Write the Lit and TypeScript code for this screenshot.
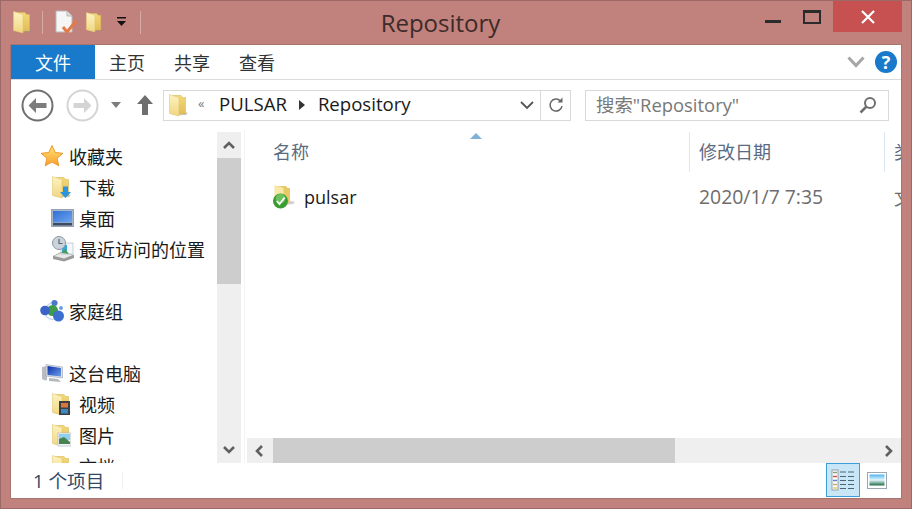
import { LitElement, css, html, svg } from "lit";
import { customElement } from "lit/decorators.js";

const folder = (w = 20, h = 24, extra: unknown = null) => html`
  <svg width=${w} height=${h} viewBox="0 0 20 24">
    <path d="M8 22.500l10-.5 2-2-3-1z" fill="#8a8a8a" opacity=".45" />
    <path d="M4 2.500h9l1.500 2h3v16.500H4z" fill="url(#backFold)" stroke="#d9b95c" stroke-width=".6" />
    <path d="M1.500 1.500l9.500 3V23l-9.500-2.500z" fill="url(#frontFold)" stroke="#e2c873" stroke-width=".6" />
    ${extra}
  </svg>
`;

const arrowCircle = (dir: "l" | "r", ring: string, fill: string) => html`
  <svg width="33" height="33" viewBox="0 0 33 33">
    <circle cx="16.5" cy="16.5" r="15" fill="#fff" stroke=${ring} stroke-width="2" />
    <path
      d=${dir === "l"
        ? "M15 9l-7.500 7.500 7.500 7.500v-5h10.500v-5H15z"
        : "M18 9l7.500 7.500-7.500 7.500v-5H7.500v-5H18z"}
      fill=${fill}
    />
  </svg>
`;

const chevron = (d: string, w = 14, h = 14, color = "#606060", weight = 2.6) => html`
  <svg width=${w} height=${h} viewBox="0 0 14 14">
    <path d=${d} fill="none" stroke=${color} stroke-width=${weight} />
  </svg>
`;

const icons: Record<string, unknown> = {
  star: html`<svg width="24" height="24" viewBox="0 0 24 24">
    <path
      d="M12 1.500l3.200 7 7.600.8-5.700 5 1.700 7.500L12 18l-6.800 3.800 1.700-7.500-5.700-5 7.600-.8z"
      fill="url(#starFill)"
      stroke="#ee9a2c"
      stroke-width="1"
    />
  </svg>`,
  download: folder(20, 24, svg`
    <path d="M12 11.500h5V17h3l-5.500 6-5.500-6h3z" fill="#2a94dc" />
  `),
  desktop: html`<svg width="23" height="18" viewBox="0 0 23 18">
    <rect x=".5" y=".5" width="22" height="17" fill="#aab4c4" stroke="#96a2b5" />
    <rect x="2" y="2" width="19" height="11.500" fill="url(#screenFill)" />
    <rect x="2" y="14" width="19" height="2.500" fill="#3e4a5e" />
  </svg>`,
  recent: html`<svg width="24" height="26" viewBox="0 0 24 26">
    <path d="M2 20l8-4 13 3v3l-10 3.500L2 23z" fill="#9a9a9a" />
    <path d="M3 20l8-3.500L22 19l-9 3.500z" fill="#e8e8e8" />
    <rect x="10" y="7" width="12" height="11" fill="#f3f7fa" stroke="#aab4bc" stroke-width=".6" />
    <rect x="11" y="9" width="5" height="7" fill="#35a8d8" />
    <path d="M10 17l4-4 4 5z" fill="#4c9a60" />
    <circle cx="8" cy="7" r="6.500" fill="#c9d3dc" stroke="#8d99a5" />
    <path d="M8 3v4.500h3.500" fill="none" stroke="#5a6670" stroke-width="1.200" />
  </svg>`,
  homegroup: html`<svg width="24" height="22" viewBox="0 0 24 22">
    <path d="M6 11c0-7 6-10 12-8M18 18c-5 3-11 1-13-4" fill="none" stroke="#c6daf0" stroke-width="1.500" />
    <circle cx="14.500" cy="3" r="3" fill="#4f77c9" />
    <circle cx="12.500" cy="10.500" r="5.500" fill="#3f9a4c" />
    <circle cx="5" cy="10.500" r="4.800" fill="#3c63c6" />
    <circle cx="18.500" cy="16" r="5.500" fill="#3d6fd0" />
    <circle cx="21" cy="8" r="2" fill="#6f9ddd" />
  </svg>`,
  computer: html`<svg style="margin-left:2px" width="21" height="20" viewBox="0 0 21 20">
    <path d="M0 4l5-1v14l-2 .5L0 16z" fill="#b9bdc2" />
    <path d="M4 1.500L20.500 4v11L4 13z" fill="#dfe4ea" stroke="#9ca3ac" stroke-width=".6" />
    <path d="M5.500 3L19 5v8.500L5.500 12z" fill="url(#pcFill)" />
    <path d="M7 15l9 1 3 3-12-1z" fill="#b4b8bd" />
  </svg>`,
  video: folder(20, 24, svg`
    <rect x="8" y="9" width="11" height="14" fill="#3c3f44" />
    <rect x="10" y="11" width="7" height="4.500" fill="#d9783c" />
    <rect x="10" y="17" width="7" height="4.500" fill="#3c8ac0" />
  `),
  picture: folder(20, 24, svg`
    <rect x="7" y="10" width="13" height="13" fill="#f4f6f7" stroke="#a7b1b8" stroke-width=".6" />
    <rect x="8" y="11" width="11" height="6" fill="#8fd0ee" />
    <path d="M8 21v-5l5-2 6 5v2z" fill="#47824f" />
  `),
  docs: folder(20, 24, svg`
    <rect x="8" y="10" width="11" height="13" fill="#f2f2f2" stroke="#a7b1b8" stroke-width=".6" />
  `),
};

@customElement("app-root")
export class AppRoot extends LitElement {
  static styles = css`
    :host {
      display: block;
      width: 912px;
      height: 509px;
      font-family: "Open Sans", "Noto Sans CJK SC", sans-serif;
      font-size: 18px;
      color: #1a1a1a;
    }

    svg {
      display: block;
      flex: none;
    }

    .defs {
      position: absolute;
      width: 0;
      height: 0;
    }

    .window {
      box-sizing: border-box;
      height: 509px;
      display: flex;
      flex-direction: column;
      background: #c1817c;
      border: 1px solid #9b6a66;
      padding: 0 10px 10px;
    }

    /* title bar */
    .titlebar {
      height: 44px;
      flex: none;
      display: flex;
      align-items: flex-start;
      margin-right: -1px;
    }

    .qat {
      width: 125px;
      flex: none;
      height: 44px;
      display: flex;
      align-items: center;
      padding-left: 1px;
      margin-top: -1px;
    }

    .qat-sep {
      width: 2px;
      height: 23px;
      background: #ad7c79;
      border-right: 1px solid #d6aaa6;
      box-sizing: border-box;
    }

    .title {
      flex: 1;
      text-align: center;
      font-size: 24px;
      line-height: 44px;
      color: #3c2b2a;
      padding-right: 4px;
    }

    .controls {
      display: flex;
      align-items: flex-start;
      flex: none;
    }

    .ctl {
      height: 31px;
      display: flex;
      align-items: center;
      justify-content: center;
    }

    .ctl.min {
      width: 50px;
    }

    .ctl.max {
      width: 28px;
      margin-right: 7px;
    }

    .ctl.close {
      width: 69px;
      background: #c75050;
    }

    /* client area */
    .client {
      flex: 1;
      min-height: 0;
      background: #fff;
      box-shadow: 0 0 0 1px #a97470;
      display: flex;
      flex-direction: column;
    }

    .ribbon {
      height: 34px;
      flex: none;
      display: flex;
      align-items: stretch;
      border-bottom: 1px solid #dadbdc;
    }

    .tab-file {
      width: 84px;
      background: #1979ca;
      color: #fff;
      display: flex;
      align-items: center;
      justify-content: center;
    }

    .tabs {
      display: flex;
      align-items: center;
      gap: 29px;
      padding-left: 14px;
      flex: 1;
      color: #333;
    }

    .ribbon-right {
      display: flex;
      align-items: center;
      gap: 10px;
      padding-right: 4px;
    }

    .help {
      width: 22px;
      height: 22px;
      border-radius: 50%;
      background: #1979ca;
      color: #fff;
      font-size: 18px;
      font-weight: 700;
      line-height: 22px;
      text-align: center;
    }

    /* navigation */
    .nav {
      height: 50px;
      flex: none;
      display: flex;
      align-items: center;
    }

    .back {
      margin-left: 10px;
    }

    .forward {
      margin-left: 12px;
    }

    .history {
      margin-left: 12px;
    }

    .up {
      margin-left: 16px;
    }

    .address {
      box-sizing: border-box;
      width: 408px;
      height: 31px;
      margin-left: 10px;
      border: 1px solid #d9d9d9;
      display: flex;
      align-items: center;
      padding-left: 4px;
    }

    .crumb-quote {
      margin-left: 10px;
      width: 21px;
      font-size: 13px;
      color: #7a7a7a;
    }

    .crumb-sep {
      margin: 0 13px 0 12px;
    }

    .addr-path {
      flex: 1;
      display: flex;
      align-items: center;
      font-size: 18.6px;
      line-height: 27px;
      padding-bottom: 4px;
    }

    .addr-path svg {
      margin-top: 4px;
    }

    .addr-drop {
      width: 30px;
      display: flex;
      justify-content: center;
      padding-left: 3px;
      box-sizing: border-box;
    }

    .addr-refresh {
      box-sizing: border-box;
      width: 30px;
      height: 29px;
      border-left: 1px solid #d9d9d9;
      display: flex;
      align-items: center;
      justify-content: center;
    }

    .search {
      box-sizing: border-box;
      width: 304px;
      height: 31px;
      margin-left: 14px;
      border: 1px solid #d9d9d9;
      display: flex;
      align-items: center;
      justify-content: space-between;
      padding: 0 11px 0 10px;
      color: #787878;
    }

    .search span {
      font-size: 18.4px;
      line-height: 27px;
      padding-bottom: 2px;
    }

    /* content */
    .content {
      flex: 1;
      min-height: 0;
      display: flex;
    }

    .sidebar {
      width: 206px;
      flex: none;
      overflow: hidden;
      padding-top: 10px;
      box-sizing: border-box;
    }

    .node {
      height: 31px;
      display: flex;
      align-items: center;
      white-space: nowrap;
    }

    .node .ico {
      width: 30px;
      flex: none;
      display: flex;
      box-sizing: border-box;
    }

    .node.top {
      padding-left: 28px;
    }

    .node.top .ico {
      padding-left: 1px;
    }

    .node.child {
      padding-left: 38px;
    }

    .node.child .ico {
      padding-left: 2px;
    }

    .spacer {
      height: 31px;
    }

    .vscroll {
      width: 24px;
      flex: none;
      margin-top: 2px;
      background: #efefef;
      display: flex;
      flex-direction: column;
    }

    .sb-btn {
      height: 26px;
      flex: none;
      display: flex;
      align-items: center;
      justify-content: center;
    }

    .v-thumb {
      height: 126px;
      flex: none;
      background: #cdcdcd;
    }

    .v-track {
      flex: 1;
    }

    .main {
      flex: 1;
      min-width: 0;
      margin-left: 3px;
      padding-left: 2px;
      border-left: 1px solid #f4f4f4;
      display: flex;
      flex-direction: column;
    }

    .files {
      flex: 1;
      min-height: 0;
      overflow: hidden;
      color: #6d6d6d;
    }

    .head,
    .file {
      display: grid;
      grid-template-columns: 442px 195px 1fr;
      white-space: nowrap;
    }

    .head {
      height: 40px;
      margin-top: 2px;
      color: #5a6b80;
    }

    .head > div {
      position: relative;
      line-height: 40px;
      padding-left: 10px;
      overflow: hidden;
    }

    .head > div + div {
      border-left: 1px solid #dbe7f3;
      padding-left: 9px;
    }

    .head .name {
      padding-left: 26px;
    }

    .sort {
      position: absolute;
      left: 223px;
      top: 1px;
    }

    .file {
      margin-top: 9px;
      height: 31px;
      align-items: center;
    }

    .file > div {
      padding-left: 10px;
      overflow: hidden;
    }

    .file .date {
      font-size: 19.4px;
    }

    .file .name {
      padding-left: 26px;
      display: flex;
      align-items: center;
      gap: 9px;
      color: #1a1a1a;
    }

    .hscroll {
      height: 25px;
      flex: none;
      background: #efefef;
      display: flex;
    }

    .hscroll .sb-btn {
      width: 26px;
      height: auto;
    }

    .h-thumb {
      width: 402px;
      background: #cdcdcd;
    }

    .h-track {
      flex: 1;
    }

    /* status bar */
    .status {
      height: 35px;
      flex: none;
      display: flex;
      align-items: center;
      color: #2f4a68;
    }

    .count {
      margin-left: 22px;
      width: 89px;
      font-size: 18.6px;
      line-height: 30px;
    }

    .status-sep {
      width: 1px;
      height: 17px;
      background: #f0f0f0;
    }

    .views {
      margin-left: auto;
      display: flex;
      align-items: center;
      margin-right: 7px;
      align-self: flex-start;
    }

    .view {
      box-sizing: border-box;
      width: 34px;
      height: 34px;
      display: flex;
      align-items: center;
      justify-content: center;
    }

    .view.on {
      background: #c9e6f6;
      border: 1px solid #3a9fd8;
    }
  `;

  render() {
    return html`
      <svg class="defs" aria-hidden="true">
        <defs>
          <linearGradient id="frontFold" x1="0" y1="0" x2="0" y2="1">
            <stop offset="0" stop-color="#fdf3c0" />
            <stop offset="1" stop-color="#f0d682" />
          </linearGradient>
          <linearGradient id="backFold" x1="0" y1="0" x2="0" y2="1">
            <stop offset="0" stop-color="#f3d978" />
            <stop offset="1" stop-color="#e2bd58" />
          </linearGradient>
          <linearGradient id="starFill" x1="0" y1="0" x2="0" y2="1">
            <stop offset="0" stop-color="#ffe27a" />
            <stop offset="1" stop-color="#fb9f2a" />
          </linearGradient>
          <linearGradient id="screenFill" x1="0" y1="0" x2="1" y2="1">
            <stop offset="0" stop-color="#2f6fd6" />
            <stop offset="1" stop-color="#6ea5ec" />
          </linearGradient>
          <linearGradient id="pcFill" x1="0" y1="0" x2="1" y2="1">
            <stop offset="0" stop-color="#0c2fa8" />
            <stop offset="1" stop-color="#6da0ea" />
          </linearGradient>
          <linearGradient id="thumbFill" x1="0" y1="0" x2="0" y2="1">
            <stop offset="0" stop-color="#4fb4ee" />
            <stop offset=".5" stop-color="#e4f6fc" />
            <stop offset="1" stop-color="#1f6a42" />
          </linearGradient>
        </defs>
      </svg>
      <div class="window">
        ${this.renderTitlebar()}
        <div class="client">
          ${this.renderRibbon()} ${this.renderNav()}
          <div class="content">
            ${this.renderSidebar()}
            <div class="vscroll">
              <div class="sb-btn">${chevron("M2 10l5-5 5 5")}</div>
              <div class="v-thumb"></div>
              <div class="v-track"></div>
              <div class="sb-btn">${chevron("M2 4l5 5 5-5")}</div>
            </div>
            ${this.renderMain()}
          </div>
          ${this.renderStatus()}
        </div>
      </div>
    `;
  }

  renderTitlebar() {
    return html`
      <div class="titlebar">
        <div class="qat">
          ${folder(20, 24)}
          <div class="qat-sep" style="margin-left:10px"></div>
          <svg style="margin-left:12px" width="22" height="24" viewBox="0 0 22 24">
            <path d="M1 1h11l5 5v16H1z" fill="#f6f6f6" stroke="#b9b9b9" />
            <path d="M12 1v5h5" fill="#ddd" stroke="#b9b9b9" />
            <path d="M8 17l4 5 9-11" fill="none" stroke="#e57a45" stroke-width="3" />
          </svg>
          <div style="margin-left:8px">${folder(18, 24)}</div>
          <svg style="margin-left:13px" width="12" height="12" viewBox="0 0 12 12">
            <rect x="1" y="1" width="9" height="1.500" fill="#111" />
            <path d="M1 5h9l-4.500 5z" fill="#111" />
          </svg>
          <div class="qat-sep" style="margin-left:12px"></div>
        </div>
        <div class="title">Repository</div>
        <div class="controls">
          <div class="ctl min">
            <svg width="16" height="4" viewBox="0 0 16 4" style="margin-top:11px">
              <rect width="16" height="3" fill="#2b2b2b" />
            </svg>
          </div>
          <div class="ctl max">
            <svg width="18" height="14" viewBox="0 0 18 14" style="margin-top:1px">
              <path d="M1 1.500h16V13H1z" fill="none" stroke="#2b2b2b" stroke-width="2" />
              <rect x="0" y="0" width="18" height="3" fill="#2b2b2b" />
            </svg>
          </div>
          <div class="ctl close">
            <svg width="14" height="14" viewBox="0 0 14 14">
              <path d="M1 1l12 12M13 1L1 13" stroke="#fff" stroke-width="2.200" />
            </svg>
          </div>
        </div>
      </div>
    `;
  }

  renderRibbon() {
    return html`
      <div class="ribbon">
        <div class="tab-file">文件</div>
        <div class="tabs">
          <span>主页</span>
          <span>共享</span>
          <span>查看</span>
        </div>
        <div class="ribbon-right">
          <svg width="18" height="12" viewBox="0 0 18 12">
            <path d="M1.500 1.500L9 9.500l7.500-8" fill="none" stroke="#a6a6a6" stroke-width="3" />
          </svg>
          <div class="help">?</div>
        </div>
      </div>
    `;
  }

  renderNav() {
    return html`
      <div class="nav">
        <div class="back">${arrowCircle("l", "#6f6f6f", "#7d7d7d")}</div>
        <div class="forward">${arrowCircle("r", "#d4d4d4", "#d4d4d4")}</div>
        <svg class="history" width="10" height="6" viewBox="0 0 10 6">
          <path d="M0 0h10L5 6z" fill="#7d7d7d" />
        </svg>
        <svg class="up" width="16" height="20" viewBox="0 0 16 20">
          <path d="M8 0l8 9h-5v11H5V9H0z" fill="#6f6f6f" />
        </svg>
        <div class="address">
          <div class="addr-path">
            ${folder(20, 24)}
            <span class="crumb-quote">«</span>
            <span>PULSAR</span>
            <svg class="crumb-sep" width="6" height="10" viewBox="0 0 6 10">
              <path d="M0 0l6 5-6 5z" fill="#333" />
            </svg>
            <span>Repository</span>
          </div>
          <div class="addr-drop">
            ${chevron("M1 4l6 6 6-6", 14, 14, "#555", 1.8)}
          </div>
          <div class="addr-refresh">
            <svg width="16" height="16" viewBox="0 0 16 16">
              <path d="M12.500 4A6 6 0 1 0 14 9" fill="none" stroke="#666" stroke-width="1.500" />
              <path d="M9.500 5.500h5v-5z" fill="#666" />
            </svg>
          </div>
        </div>
        <div class="search">
          <span>搜索"Repository"</span>
          <svg width="18" height="18" viewBox="0 0 18 18">
            <circle cx="11" cy="7" r="5" fill="none" stroke="#6f6f6f" stroke-width="2" />
            <path d="M7.500 10.500L1.500 16.500" stroke="#6f6f6f" stroke-width="2.500" />
          </svg>
        </div>
      </div>
    `;
  }

  renderNode(kind: "top" | "child", icon: string, label: string) {
    return html`
      <div class="node ${kind}">
        <div class="ico">${icons[icon]}</div>
        <span>${label}</span>
      </div>
    `;
  }

  renderSidebar() {
    return html`
      <div class="sidebar">
        ${this.renderNode("top", "star", "收藏夹")}
        ${this.renderNode("child", "download", "下载")}
        ${this.renderNode("child", "desktop", "桌面")}
        ${this.renderNode("child", "recent", "最近访问的位置")}
        <div class="spacer"></div>
        ${this.renderNode("top", "homegroup", "家庭组")}
        <div class="spacer"></div>
        ${this.renderNode("top", "computer", "这台电脑")}
        ${this.renderNode("child", "video", "视频")}
        ${this.renderNode("child", "picture", "图片")}
        ${this.renderNode("child", "docs", "文档")}
      </div>
    `;
  }

  renderMain() {
    return html`
      <div class="main">
        <div class="files">
          <div class="head">
            <div class="name">
              名称
              <svg class="sort" width="12" height="6" viewBox="0 0 12 6">
                <path d="M6 0l6 6H0z" fill="#7fb2d6" />
              </svg>
            </div>
            <div>修改日期</div>
            <div>类型</div>
          </div>
          <div class="file">
            <div class="name">
              <svg width="22" height="24" viewBox="0 0 22 24">
                <path d="M12 20l8-1 2-2-4-1z" fill="#8a8a8a" opacity=".4" />
                <path d="M4 1h9l1.500 2H17v15H4z" fill="#e9c868" />
                <path d="M1.500 0l9 3v15l-9-3z" fill="#f8e8a8" />
                <circle cx="7.500" cy="16" r="7.500" fill="#3a9c31" />
                <circle cx="7.500" cy="13.500" r="4.800" fill="#6cc35c" />
                <path d="M3.800 16l2.700 3 5.200-6.500" fill="none" stroke="#fff" stroke-width="1.800" />
              </svg>
              <span>pulsar</span>
            </div>
            <div class="date">2020/1/7 7:35</div>
            <div>文件夹</div>
          </div>
        </div>
        <div class="hscroll">
          <div class="sb-btn">${chevron("M9 2L4 7l5 5")}</div>
          <div class="h-thumb"></div>
          <div class="h-track"></div>
          <div class="sb-btn">${chevron("M5 2l5 5-5 5")}</div>
        </div>
      </div>
    `;
  }

  renderStatus() {
    return html`
      <div class="status">
        <span class="count">1 个项目</span>
        <div class="status-sep"></div>
        <div class="views">
          <div class="view on">
            <svg width="24" height="22" viewBox="0 0 24 22">
              <rect x="1" y="1" width="6" height="20" fill="#fff" stroke="#7e8c99" stroke-width=".8" />
              <path d="M2 3.500h4" stroke="#8aa06a" stroke-width="1.500" />
              <path d="M2 7.500h4" stroke="#e0504c" stroke-width="1.500" />
              <path d="M2 11.500h4" stroke="#5d86c8" stroke-width="1.500" />
              <path d="M2 15.500h4" stroke="#c8a866" stroke-width="1.500" />
              <path d="M2 19h4" stroke="#e4cc5a" stroke-width="1.500" />
              <path
                d="M9 3h6M17 3h6M9 7.500h6M17 7.500h6M9 11.500h6M17 11.500h6M9 15.500h6M17 15.500h6M9 19.500h6M17 19.500h6"
                stroke="#4d6478"
                stroke-width="1"
              />
            </svg>
          </div>
          <div class="view">
            <svg width="20" height="17" viewBox="0 0 20 17">
              <rect x=".5" y=".5" width="19" height="16" fill="#fff" stroke="#9aa6b2" />
              <rect x="2.500" y="2.500" width="15" height="11" fill="url(#thumbFill)" />
            </svg>
          </div>
        </div>
      </div>
    `;
  }
}
